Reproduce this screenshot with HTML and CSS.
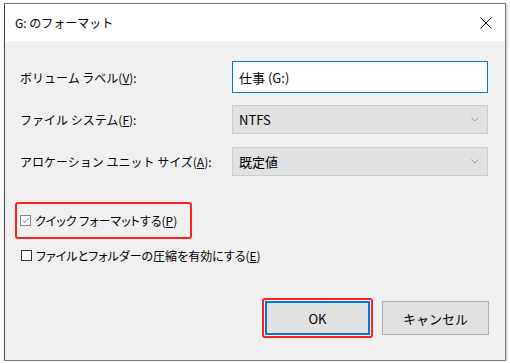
FILE: index.html
```html
<!DOCTYPE html>
<html lang="ja">
<head>
    <meta charset="UTF-8">
    <meta name="viewport" content="width=device-width, initial-scale=1.0">
    <title>G: のフォーマット</title>
    <link rel="stylesheet" href="styles.css">
</head>
<body>
    <div class="window">
        <div class="titlebar">
            <span class="title">G: のフォーマット</span>
            <svg class="close" width="12" height="12" viewBox="0 0 12 12">
                <path d="M0.5 0.5 L11.5 11.5 M11.5 0.5 L0.5 11.5" stroke="#000" stroke-width="1" fill="none"/>
            </svg>
        </div>

        <div class="content">
            <!-- Fields -->
            <div class="fields">
                <label class="field-label">ボリューム ラベル(<u>V</u>):</label>
                <div class="text-input">仕事 (G:)</div>

                <label class="field-label">ファイル システム(<u>F</u>):</label>
                <div class="select-box">
                    <span>NTFS</span>
                    <svg width="8" height="5" viewBox="0 0 8 5"><polyline points="0.5,0.5 4,4 7.5,0.5" stroke="#9a9a9a" fill="none"/></svg>
                </div>

                <label class="field-label">アロケーション ユニット サイズ(<u>A</u>):</label>
                <div class="select-box">
                    <span>既定値</span>
                    <svg width="8" height="5" viewBox="0 0 8 5"><polyline points="0.5,0.5 4,4 7.5,0.5" stroke="#9a9a9a" fill="none"/></svg>
                </div>
            </div>

            <!-- Options -->
            <div class="checks">
                <div class="highlight">
                    <div class="check">
                        <svg width="11" height="11" viewBox="0 0 11 11">
                            <rect x="0.5" y="0.5" width="10" height="10" fill="#fff" stroke="#8a8a8a"/>
                            <polyline points="2.5,5.5 4.5,7.5 8.5,3" stroke="#8a8a8a" fill="none"/>
                        </svg>
                        <span>クイック フォーマットする(<u>P</u>)</span>
                    </div>
                </div>
                <div class="check plain">
                    <svg width="11" height="11" viewBox="0 0 11 11">
                        <rect x="0.5" y="0.5" width="10" height="10" fill="#fff" stroke="#333"/>
                    </svg>
                    <span>ファイルとフォルダーの圧縮を有効にする(<u>E</u>)</span>
                </div>
            </div>

            <!-- Buttons -->
            <div class="buttons">
                <div class="ok-frame">
                    <button class="btn default">OK</button>
                </div>
                <button class="btn">キャンセル</button>
            </div>
        </div>
    </div>
</body>
</html>
```

FILE: styles.css
```css
body {
    margin: 0;
    background-color: #fff;
    font-family: "Noto Sans CJK JP", "Noto Sans", sans-serif;
    font-size: 12px;
    color: #000;
}

.window {
    margin: 3px 0 0 4px;
    width: 500px;
    height: 356px;
    border: 1px solid #7a7a7a;
    border-left-color: #4a4a4a;
    background-color: #f0f0f0;
    box-shadow: 1px 1px 3px rgba(0, 0, 0, 0.25);
    display: flex;
    flex-direction: column;
}

.titlebar {
    height: 37px;
    background-color: #fff;
    display: flex;
    align-items: center;
    justify-content: space-between;
    padding: 0 13px 0 10px;
    flex-shrink: 0;
}

.title {
    font-size: 12px;
}

.content {
    flex: 1;
    padding: 20px 16px 0 15px;
}

.fields {
    display: grid;
    grid-template-columns: 212px 256px;
    grid-auto-rows: 32px;
    row-gap: 10px;
    align-items: center;
}

.field-label {
    font-size: 12px;
    white-space: nowrap;
}

.text-input {
    height: 32px;
    box-sizing: border-box;
    border: 1px solid #0078d7;
    background-color: #fff;
    padding: 0 6px;
    display: flex;
    align-items: center;
    font-size: 13px;
}

.select-box {
    height: 29px;
    box-sizing: border-box;
    border: 1px solid #cccccc;
    background-color: #e1e1e1;
    padding: 0 8px 0 6px;
    display: flex;
    align-items: center;
    justify-content: space-between;
    font-size: 13px;
}

.checks {
    margin-top: 25px;
}

.highlight {
    width: 177px;
    height: 37px;
    box-sizing: border-box;
    border: 2.5px solid #ff1f1f;
    border-radius: 3px;
    margin-left: -5px;
    padding-left: 3px;
    display: flex;
    align-items: center;
}

.check {
    display: flex;
    align-items: center;
    gap: 4px;
    height: 20px;
    white-space: nowrap;
    font-feature-settings: "palt";
}

.check.plain {
    margin-top: 6px;
    padding-left: 1px;
}

.check svg {
    flex-shrink: 0;
}

.buttons {
    margin-top: 33px;
    display: flex;
    justify-content: flex-end;
    align-items: center;
    gap: 9px;
}

.ok-frame {
    border: 2.5px solid #ff1f1f;
    border-radius: 3px;
    padding: 1px;
}

.btn {
    width: 107px;
    height: 34px;
    background-color: #e1e1e1;
    border: 1px solid #adadad;
    font-family: "Noto Sans CJK JP", "Noto Sans", sans-serif;
    font-size: 13px;
    color: #000;
    padding: 0;
}

.btn.default {
    width: 105px;
    border: 2px solid #0078d7;
}
```
